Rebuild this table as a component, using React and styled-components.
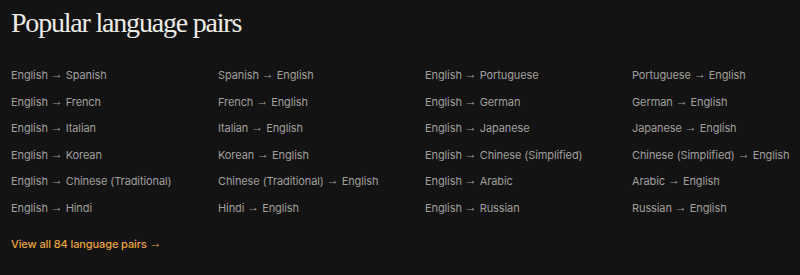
import React from 'react';
import styled, {createGlobalStyle} from 'styled-components';

const GlobalStyle = createGlobalStyle`
    html, body {
        margin: 0;
        background: #131313;
    }
`;

const pairs = [
    ['English', 'Spanish'], ['Spanish', 'English'], ['English', 'Portuguese'], ['Portuguese', 'English'],
    ['English', 'French'], ['French', 'English'], ['English', 'German'], ['German', 'English'],
    ['English', 'Italian'], ['Italian', 'English'], ['English', 'Japanese'], ['Japanese', 'English'],
    ['English', 'Korean'], ['Korean', 'English'], ['English', 'Chinese (Simplified)'], ['Chinese (Simplified)', 'English'],
    ['English', 'Chinese (Traditional)'], ['Chinese (Traditional)', 'English'], ['English', 'Arabic'], ['Arabic', 'English'],
    ['English', 'Hindi'], ['Hindi', 'English'], ['English', 'Russian'], ['Russian', 'English'],
];

const App = () => {
    return <Section>
            <GlobalStyle/>
            <Heading>Popular language pairs</Heading>
            <PairGrid>
                {pairs.map(([from, to]) => <PairLink key={from + to} href="#">{from} <Arrow>→</Arrow> {to}</PairLink>)}
            </PairGrid>
            <ViewAll href="#">View all 84 language pairs <Arrow>→</Arrow></ViewAll>
        </Section>;
};

export default App;

const Section = styled.section`
    height: 275px;
    box-sizing: border-box;
    padding: 5px 11px 0;
    background: #131313;
    overflow: hidden;
`;

const Heading = styled.h2`
    margin: 0 0 21px;
    font-family: "Liberation Serif", serif;
    font-weight: 400;
    font-size: 28px;
    line-height: 36px;
    letter-spacing: -1.2px;
    color: #ecebe6;
`;

const PairGrid = styled.div`
    display: grid;
    grid-template-columns: repeat(4, 207px);
    width: max-content;
`;

const PairLink = styled.a`
    display: block;
    height: 26.5px;
    line-height: 26.5px;
    font-family: "Inter", sans-serif;
    font-size: 11px;
    letter-spacing: -0.1px;
    color: #a09f9c;
    text-decoration: none;
    white-space: nowrap;
`;

const Arrow = styled.span`
    display: inline-block;
    font-family: "Liberation Sans", sans-serif;
    font-size: 12px;
    line-height: 1;
    vertical-align: 1px;
`;

const ViewAll = styled.a`
    display: inline-block;
    margin-top: 13px;
    font-family: "Inter", sans-serif;
    font-size: 11px;
    font-weight: 500;
    line-height: 20px;
    letter-spacing: -0.1px;
    color: #e9a33b;
    text-decoration: none;
`;
